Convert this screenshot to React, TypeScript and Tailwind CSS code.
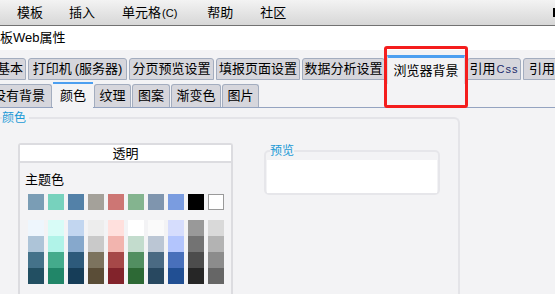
const themeRow = [
  'bg-[#7a9db5]',
  'bg-[#77d2bd]',
  'bg-[#5381a8]',
  'bg-[#a4a19a]',
  'bg-[#cd7674]',
  'bg-[#84b48f]',
  'bg-[#7f95ae]',
  'bg-[#7a9ce0]',
  'bg-[#000000]',
];

const shades = [
  ['bg-[#eef6fd]', 'bg-[#adc4d8]', 'bg-[#44728a]', 'bg-[#224f62]'],
  ['bg-[#d8fcf7]', 'bg-[#b0f3e8]', 'bg-[#44ab8c]', 'bg-[#218668]'],
  ['bg-[#c2d6f0]', 'bg-[#86a8cc]', 'bg-[#2d5a7b]', 'bg-[#163d58]'],
  ['bg-[#ededed]', 'bg-[#c9c9c9]', 'bg-[#7c735e]', 'bg-[#5a4d37]'],
  ['bg-[#ffe0dd]', 'bg-[#f2b4ae]', 'bg-[#a64848]', 'bg-[#82232b]'],
  ['bg-[#ffffff]', 'bg-[#c3dccd]', 'bg-[#528f61]', 'bg-[#2d6935]'],
  ['bg-[#fafafa]', 'bg-[#bbc6d4]', 'bg-[#4a6a83]', 'bg-[#284860]'],
  ['bg-[#d6ddfd]', 'bg-[#b3c5fd]', 'bg-[#4870bb]', 'bg-[#214f93]'],
  ['bg-[#999999]', 'bg-[#737373]', 'bg-[#4c4c4c]', 'bg-[#262626]'],
  ['bg-[#d9d9d9]', 'bg-[#b3b3b3]', 'bg-[#8c8c8c]', 'bg-[#666666]'],
];

const tab =
  'h-[22px] shrink-0 flex items-center justify-center rounded-t-[3px] border border-[#a3adbf] bg-[#d6d6dc] whitespace-nowrap';
const subTab =
  'h-[23px] shrink-0 flex items-center justify-center rounded-t-[3px] border border-b-0 border-[#a3adbf] bg-[#d6d6dc] whitespace-nowrap';

export default function App() {
  return (
    <div className="relative w-[555px] h-[294px] overflow-hidden bg-[#f3f3f5] text-[13px] text-black font-['Liberation_Sans','Noto_Sans_CJK_SC',sans-serif]">
      {/* menu bar */}
      <div className="h-[26px] flex items-center pl-[17px] bg-linear-to-b from-[#f3f3f3] to-[#d7d7d7] border-b border-[#727272]">
        <span>模板</span>
        <span className="ml-[26px]">插入</span>
        <span className="ml-[27px]">
          单元格<span className="text-[11px] ml-[1px]">(C)</span>
        </span>
        <span className="ml-[30px]">帮助</span>
        <span className="ml-[27px]">社区</span>
        <span className="ml-auto w-[2px] h-[9px] bg-black" />
      </div>

      {/* title */}
      <div className="h-[24px] flex items-center bg-white">板Web属性</div>

      {/* main tabs */}
      <div className="h-[34px] flex items-start gap-[2px] pt-[8px] -ml-[6px]">
        <div className={`${tab} w-[32px]`}>基本</div>
        <div className={`${tab} w-[99px]`}>
          打印机<span className="ml-[3px]">(服务器)</span>
        </div>
        <div className={`${tab} w-[85px]`}>分页预览设置</div>
        <div className={`${tab} w-[84px]`}>填报页面设置</div>
        <div className={`${tab} w-[83px]`}>数据分析设置</div>
        <div className="-mt-[3px] h-[29px] w-[78px] shrink-0 flex justify-center pt-[3px] border-t-[3px] border-[#4c9ff0] border-x border-x-[#d8dbe2] bg-[#f3f3f5] whitespace-nowrap">
          浏览器背景
        </div>
        <div className={`${tab} w-[54px]`}>
          引用<span className="text-[11px] tracking-[1px] text-[#1b2a6b] ml-[1px]">Css</span>
        </div>
        <div className={`${tab} w-[60px] justify-start pl-[5px]`}>
          引用<span className="text-[11px] text-[#c4620f]">J</span>
        </div>
      </div>

      {/* sub tabs */}
      <div className="h-[24px] flex items-end gap-[1px] -ml-[6px] border-b border-[#94a3c0]">
        <div className={`${subTab} w-[58px] justify-end pr-[6px]`}>没有背景</div>
        <div className="relative -mb-px h-[26px] w-[40px] shrink-0 flex justify-center pt-[2px] border-t-2 border-[#4c9ff0] bg-[#f3f3f5]">
          颜色
        </div>
        <div className={`${subTab} w-[37px]`}>纹理</div>
        <div className={`${subTab} w-[38px]`}>图案</div>
        <div className={`${subTab} w-[50px]`}>渐变色</div>
        <div className={`${subTab} w-[37px]`}>图片</div>
      </div>

      {/* colour fieldset */}
      <fieldset className="mt-[2px] w-[460px] h-[190px] border-t-2 border-r-2 border-[#e4e4e8] rounded-tr-[6px]">
        <legend className="ml-[2px] pr-[3px] text-[12px] leading-[16px] text-[#1a9ad6]">颜色</legend>
        <div className="flex items-start">
          <div className="ml-[18px] mt-[17px] w-[215px] h-[160px] border-2 border-b-0 border-[#dcdce0] rounded-t-[3px]">
            <div className="h-[18px] flex items-center justify-center bg-white border-b-2 border-[#dcdce0] leading-none">
              透明
            </div>
            <div className="mt-[9px] pl-[5px] leading-[16px]">主题色</div>
            <div className="mt-[6px] pl-[8px] flex gap-[4px]">
              {themeRow.map((c, i) => (
                <div key={i} className={`w-[16px] h-[16px] ${c}`} />
              ))}
              <div className="w-[16px] h-[16px] bg-white border-[1.5px] border-[#9a9a9a]" />
            </div>
            <div className="mt-[10px] pl-[8px] flex gap-[4px]">
              {shades.map((col, i) => (
                <div key={i} className="flex flex-col">
                  {col.map((c, j) => (
                    <div key={j} className={`w-[16px] h-[16px] ${c}`} />
                  ))}
                </div>
              ))}
            </div>
          </div>

          <fieldset className="ml-[31px] mt-[19px] w-[176px] px-[1px] border-2 border-[#e6e6ea] rounded-[5px]">
            <legend className="ml-[3px] text-[12px] leading-[12px] text-[#1a9ad6]">预览</legend>
            <div className="mt-[3px] h-[33px] bg-white" />
          </fieldset>
        </div>
      </fieldset>

      {/* highlight */}
      <div className="absolute left-[384px] top-[46px] w-[84px] h-[62px] border-[3px] border-[#f41d1d] rounded-[3px]" />
    </div>
  );
}
